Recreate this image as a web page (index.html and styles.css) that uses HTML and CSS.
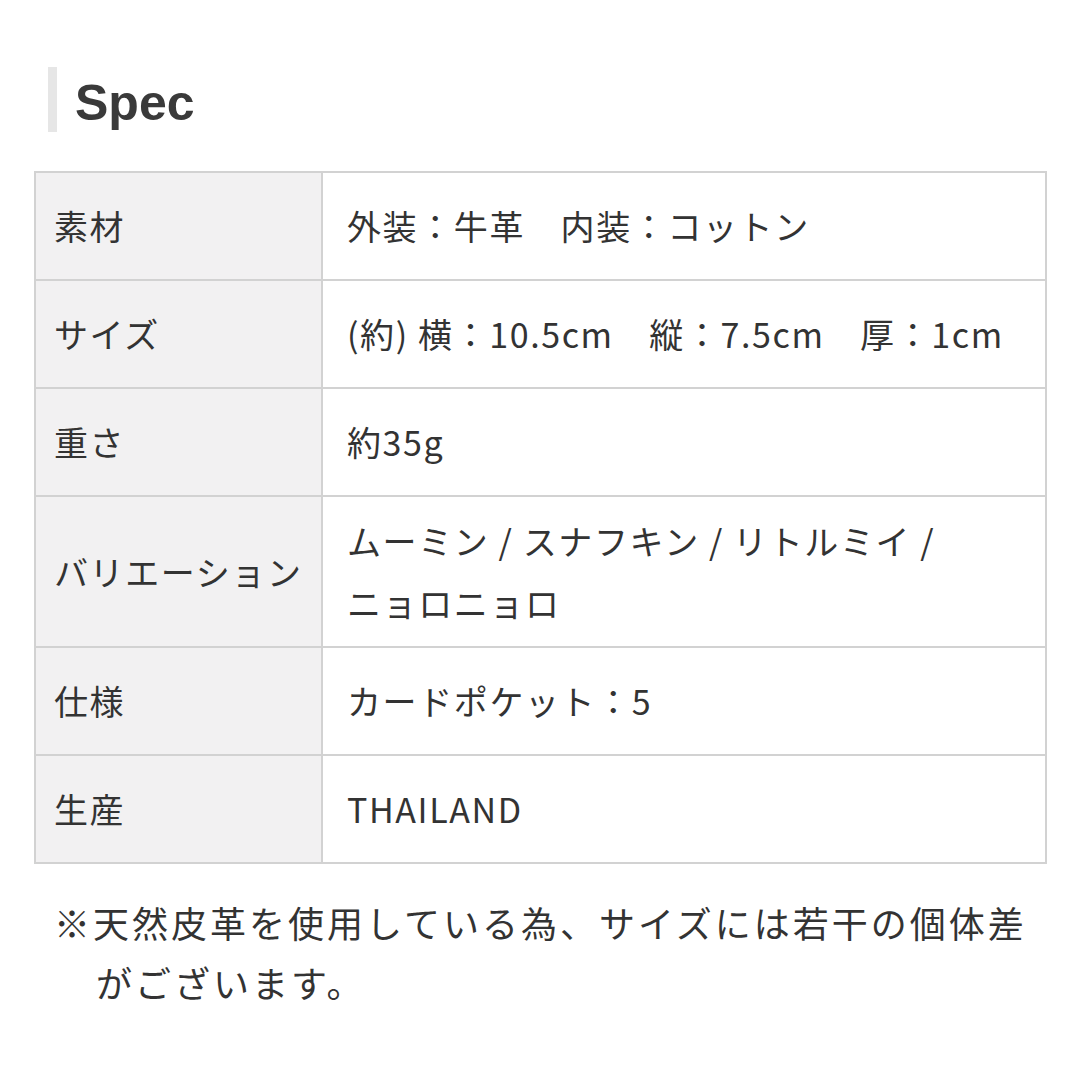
FILE: index.html
```html
<!DOCTYPE html>
<html lang="ja">
<head>
<meta charset="utf-8">
<link rel="stylesheet" href="styles.css">
</head>
<body>
<div class="page">
  <h2 class="heading">Spec</h2>
  <table class="spec">
    <tr class="row"><th>素材</th><td>外装：牛革　内装：コットン</td></tr>
    <tr class="row"><th>サイズ</th><td>(約) 横：10.5cm　縦：7.5cm　厚：1cm</td></tr>
    <tr class="row"><th>重さ</th><td>約35g</td></tr>
    <tr class="row tall"><th>バリエーション</th><td class="multi">ムーミン / スナフキン / リトルミイ /<br>ニョロニョロ</td></tr>
    <tr class="row"><th>仕様</th><td>カードポケット：5</td></tr>
    <tr class="row"><th>生産</th><td>THAILAND</td></tr>
  </table>
  <p class="note">※天然皮革を使用している為、サイズには若干の個体差がございます。</p>
</div>
</body>
</html>
```
FILE: styles.css
```css
html, body {
  margin: 0;
  padding: 0;
  background: #ffffff;
}
.page {
  padding: 67px 33px 0 34px;
  font-family: "Noto Sans CJK JP", "Noto Sans", sans-serif;
  color: #333333;
}
.heading {
  margin: 0 0 39px 14px;
  padding-left: 18px;
  border-left: 9px solid #e6e6e6;
  height: 65px;
  line-height: 72px;
  font-family: "Liberation Sans", Arial, sans-serif;
  font-weight: bold;
  font-size: 50px;
  color: #3a3a3a;
}
.spec {
  width: 1013px;
  border-collapse: collapse;
  border: 2px solid #d2d2d2;
  font-size: 34px;
  letter-spacing: 1.6px;
}
.spec th, .spec td {
  border: 2px solid #d2d2d2;
  vertical-align: middle;
  text-align: left;
  font-weight: normal;
  line-height: 40px;
  padding-top: 0;
  padding-bottom: 0;
}
.row { height: 108px; }
.row.tall { height: 151px; }
.spec th {
  width: 257px;
  padding-left: 18px;
  padding-right: 10px;
  background: #f2f1f2;
  white-space: nowrap;
}
.spec td {
  padding-left: 24px;
  padding-right: 20px;
}
.spec td.multi { line-height: 62px; }
.note {
  margin: 28px 0 0 20px;
  padding-left: 42px;
  text-indent: -42px;
  font-size: 36px;
  letter-spacing: 3px;
  line-height: 60px;
}
```
